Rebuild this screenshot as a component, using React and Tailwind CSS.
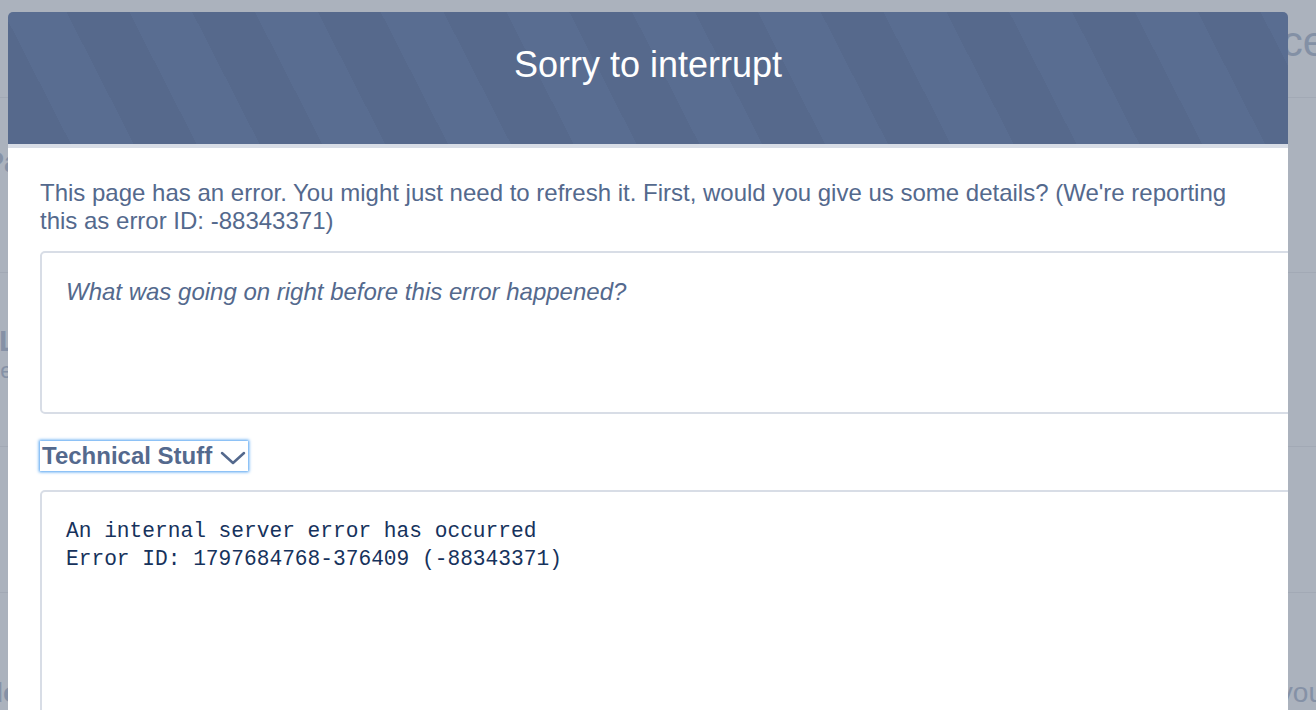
import React from "react";

// page behind the modal, dimmed by the backdrop
const BackgroundPage = () => (
  <div className="flex flex-col text-[#8591a6]">
    <div className="flex h-[98px] items-start justify-end border-b border-[#a2a9b5] pt-[16px]">
      <h1 className="mr-[-10px] whitespace-nowrap text-[42px] leading-[52px] text-[#8390a5]">
        Accelerate Productivity with Lightning Experience
      </h1>
    </div>
    <div className="h-[175px] border-b border-[#a2a9b5] pt-[48px]">
      <div className="ml-[-16px] text-[30px] font-bold leading-[32px]">Pa</div>
    </div>
    <div className="h-[174px] border-b border-[#a2a9b5] pt-[52px]">
      <div className="ml-[-1px] text-[30px] font-bold leading-[32px]">L</div>
      <div className="ml-[-12px] text-[22px] leading-[28px]">be</div>
    </div>
    <div className="h-[146px] border-b border-[#a2a9b5]" />
    <div className="flex h-[117px] items-end justify-between pb-[2px]">
      <div className="ml-[-14px] text-[28px] font-bold leading-[30px]">do</div>
      <div className="mr-[-8px] text-[28px] leading-[30px]">you</div>
    </div>
  </div>
);

const Chevron = () => (
  <svg width="26" height="16" viewBox="0 0 26 16" fill="none" className="mt-[3px] shrink-0">
    <path d="M2 3l11 10L24 3" stroke="#54698d" strokeWidth="2.5" strokeLinecap="round" strokeLinejoin="round" />
  </svg>
);

const ErrorModal = () => (
  <div className="absolute left-[8px] top-[12px] bottom-0 flex w-[1280px] flex-col overflow-hidden rounded-t-[5px]">
    <div className="relative h-[132px] shrink-0 overflow-hidden bg-[repeating-linear-gradient(63deg,#56698c_0px,#56698c_56px,#596d91_56px,#596d91_112px)] pt-[30px] text-center">
      <div className="absolute right-[-40px] top-[4px] whitespace-nowrap text-[42px] leading-[52px] text-white/[0.012]">
        Accelerate Productivity with Lightning Experience
      </div>
      <h2 className="relative text-[36px] leading-[45px] text-white">Sorry to interrupt</h2>
    </div>
    <div className="h-[4px] shrink-0 bg-[#d8dde6]" />
    <div className="flex-1 bg-white pl-[32px] pt-[31px]">
      <p className="w-[1200px] text-[24px] leading-[28px] text-[#54698d]">
        This page has an error. You might just need to refresh it. First, would you give us some details? (We're reporting this as error ID: -88343371)
      </p>
      <div className="mt-[16px] h-[163px] w-[1300px] rounded-[5px] border-2 border-[#d8dde6] pl-[24px] pt-[25px]">
        <span className="text-[24px] italic leading-[28px] text-[#54698d]">
          What was going on right before this error happened?
        </span>
      </div>
      <div className="mt-[27px] flex">
        <button className="flex h-[30px] items-center gap-[8px] bg-white pl-[2px] pr-[2px] text-[24px] font-bold leading-[28px] text-[#54698d] shadow-[0_0_3px_1px_#4a9ef0]">
          Technical Stuff
          <Chevron />
        </button>
      </div>
      <div className="mt-[19px] h-[300px] w-[1300px] rounded-[5px] border-2 border-[#d8dde6] pl-[24px] pt-[25px] font-['Liberation_Mono',monospace] text-[21.2px] leading-[28px] text-[#16325c]">
        <div>An internal server error has occurred</div>
        <div>Error ID: 1797684768-376409 (-88343371)</div>
      </div>
    </div>
  </div>
);

export default function App() {
  return (
    <div className="relative h-[710px] w-full overflow-hidden bg-[#abb2bd] font-['Liberation_Sans',Arial,sans-serif]">
      <BackgroundPage />
      <ErrorModal />
    </div>
  );
}
